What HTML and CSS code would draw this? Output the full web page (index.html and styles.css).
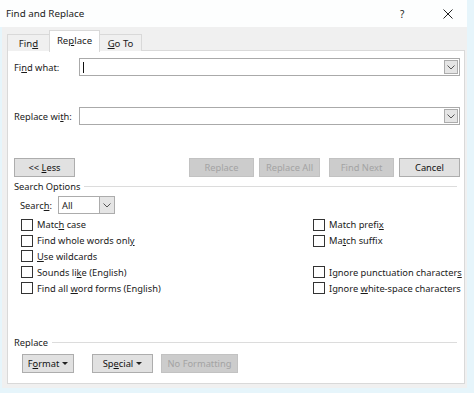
FILE: index.html
```html
<!DOCTYPE html>
<html>
<head>
<meta charset="utf-8">
<link rel="stylesheet" href="styles.css">
</head>
<body>
<div class="window">
  <div class="titlebar">
    <span class="title">Find and Replace</span>
    <span class="help">?</span>
    <span class="close"><svg width="10" height="10" viewBox="0 0 10 10"><path d="M0.5 0.5L9.5 9.5M9.5 0.5L0.5 9.5" stroke="#222" stroke-width="1" fill="none"/></svg></span>
  </div>
  <div class="tabs">
    <div class="tab"><span>Fin<u>d</u></span></div>
    <div class="tab active"><span>Re<u>p</u>lace</span></div>
    <div class="tab"><span><u>G</u>o To</span></div>
  </div>
  <div class="panel">
    <div class="field-row first">
      <span class="field-label">Fi<u>n</u>d what:</span>
      <div class="combo"><span class="caret"></span><span class="drop"><svg width="8" height="5" viewBox="0 0 8 5"><path d="M0.5 0.5L4 4L7.5 0.5" stroke="#555" fill="none"/></svg></span></div>
    </div>
    <div class="field-row second">
      <span class="field-label">Replace wi<u>t</u>h:</span>
      <div class="combo"><span class="drop"><svg width="8" height="5" viewBox="0 0 8 5"><path d="M0.5 0.5L4 4L7.5 0.5" stroke="#555" fill="none"/></svg></span></div>
    </div>
    <div class="button-row">
      <button class="btn w60"><span>&lt;&lt; <u>L</u>ess</span></button>
      <span class="grow"></span>
      <button class="btn w65 off"><span>Replace</span></button>
      <button class="btn w61 off"><span>Replace All</span></button>
      <button class="btn w65 off gap-l"><span>Find Next</span></button>
      <button class="btn w61"><span>Cancel</span></button>
    </div>
    <div class="group-label"><span>Search Options</span><span class="rule"></span></div>
    <div class="search-row">
      <span>Searc<u>h</u>:</span>
      <div class="select"><span class="select-text">All</span><span class="drop"><svg width="8" height="5" viewBox="0 0 8 5"><path d="M0.5 0.5L4 4L7.5 0.5" stroke="#555" fill="none"/></svg></span></div>
    </div>
    <div class="options">
      <label class="opt"><span class="box"></span><span class="txt">Matc<u>h</u> case</span></label>
      <label class="opt"><span class="box"></span><span class="txt">Match prefi<u>x</u></span></label>
      <label class="opt"><span class="box"></span><span class="txt">Find whole words onl<u>y</u></span></label>
      <label class="opt"><span class="box"></span><span class="txt">Ma<u>t</u>ch suffix</span></label>
      <label class="opt"><span class="box"></span><span class="txt"><u>U</u>se wildcards</span></label>
      <span class="opt"></span>
      <label class="opt"><span class="box"></span><span class="txt">Sounds li<u>k</u>e (English)</span></label>
      <label class="opt"><span class="box"></span><span class="txt">Ignore punctuation character<u>s</u></span></label>
      <label class="opt"><span class="box"></span><span class="txt">Find all <u>w</u>ord forms (English)</span></label>
      <label class="opt"><span class="box"></span><span class="txt">Ignore <u>w</u>hite-space characters</span></label>
    </div>
    <span class="grow"></span>
    <div class="group-label bottom"><span>Replace</span><span class="rule"></span></div>
    <div class="replace-buttons">
      <button class="btn w52"><span>F<u>o</u>rmat</span><span class="tri"></span></button>
      <button class="btn w61 wide-gap"><span>Sp<u>e</u>cial</span><span class="tri"></span></button>
      <button class="btn w77 off"><span>No Formatting</span></button>
    </div>
  </div>
</div>
</body>
</html>
```
FILE: styles.css
```css
* { box-sizing: border-box; }
html, body { margin: 0; padding: 0; }
body {
  width: 474px;
  height: 393px;
  background: #e6f5fb;
  font-family: "Noto Sans", "Open Sans", sans-serif;
  font-size: 9.3px;
  color: #1a1a1a;
  overflow: hidden;
}
u { text-decoration: underline; text-underline-offset: 1px; }
.window {
  margin-left: 2px;
  width: 465px;
  height: 388px;
  background: #f0f0f0;
  display: flex;
  flex-direction: column;
}
.titlebar {
  height: 27px;
  background: #fdfefe;
  display: flex;
  align-items: center;
  padding-left: 6px;
  margin-left: -2px;
  width: 467px;
}
.title { font-size: 9.8px; color: #222; flex: 1; }
.help { width: 16px; font-size: 10px; color: #222; margin-right: 27px; }
.close { width: 10px; height: 10px; display: block; margin-right: 14px; line-height: 0; }
.tabs {
  display: flex;
  align-items: flex-end;
  margin-left: 5px;
  height: 24px;
  position: relative;
  z-index: 1;
}
.tab {
  height: 17px;
  border: 1px solid #d9d9d9;
  border-bottom: none;
  background: #f0f0f0;
  display: flex;
  align-items: center;
  justify-content: center;
  font-size: 9.6px;
  width: 43px;
  white-space: nowrap;
}
.tab.active {
  height: 22px;
  width: 51px;
  margin: 0 -1px;
  background: #fff;
  position: relative;
  top: 1px;
  z-index: 2;
  padding-bottom: 2px;
}
.panel {
  margin: -1px 2px 4px 5px;
  flex: 1;
  background: #fff;
  border: 1px solid #d9d9d9;
  display: flex;
  flex-direction: column;
  padding: 0 4px 10px 6px;
}
.field-row {
  display: flex;
  align-items: center;
  height: 18px;
}
.field-row.first { margin-top: 7px; }
.field-row.second { margin-top: 31px; }
.field-label { width: 65px; white-space: nowrap; }
.combo {
  width: 381px;
  height: 18px;
  border: 1px solid #aaa;
  background: #fff;
  display: flex;
  align-items: center;
  padding: 1px;
}
.caret { width: 1px; height: 11px; background: #111; margin-left: 2px; }
.drop {
  margin-left: auto;
  width: 14px;
  height: 14px;
  background: #e5e5e5;
  border: 1px solid #acacac;
  display: flex;
  align-items: center;
  justify-content: center;
}
.button-row {
  display: flex;
  margin-top: 33px;
  gap: 5px;
}
.grow { flex: 1; }
.btn {
  height: 19px;
  font-family: inherit;
  font-size: 9.3px;
  color: #111;
  background: #e1e1e1;
  border: 1px solid #adadad;
  padding: 0;
  margin: 0;
  display: flex;
  align-items: center;
  justify-content: center;
  gap: 3px;
  white-space: nowrap;
}
.btn.off { background: #cccccc; border-color: #c2c2c2; color: #a3a3a3; }
.gap-l { margin-left: 4px; }
.w52 { width: 52px; }
.w60 { width: 61px; }
.w61 { width: 61px; }
.w65 { width: 65px; }
.w77 { width: 77px; }
.group-label {
  display: flex;
  align-items: center;
  gap: 4px;
  margin-top: 2px;
  height: 14px;
  padding-right: 3px;
  white-space: nowrap;
}
.rule { flex: 1; height: 1px; background: #dcdcdc; }
.search-row {
  display: flex;
  align-items: center;
  gap: 6px;
  margin-top: 3px;
  padding-left: 6px;
}
.select {
  width: 57px;
  height: 18px;
  border: 1px solid #acacac;
  background: #fff;
  display: flex;
  align-items: stretch;
}
.select-text { flex: 1; padding-left: 3px; display: flex; align-items: center; }
.select .drop { height: 16px; width: 15px; border-width: 0 0 0 1px; }
.options {
  display: grid;
  grid-template-columns: 292px auto;
  grid-auto-rows: 15.8px;
  margin-top: 3px;
  padding-left: 7px;
}
.opt { display: flex; align-items: center; gap: 4px; white-space: nowrap; }
.box {
  width: 12px;
  height: 12px;
  border: 1px solid #333;
  background: #fff;
  flex: none;
}
.group-label.bottom { margin-top: 0; }
.replace-buttons {
  display: flex;
  gap: 9px;
  padding-left: 8px;
  margin-top: 5px;
}
.replace-buttons .wide-gap { margin-left: 9px; }
.replace-buttons .off { margin-left: -1px; }
.tri {
  width: 0; height: 0;
  border-left: 3px solid transparent;
  border-right: 3px solid transparent;
  border-top: 3px solid #222;
}
```
